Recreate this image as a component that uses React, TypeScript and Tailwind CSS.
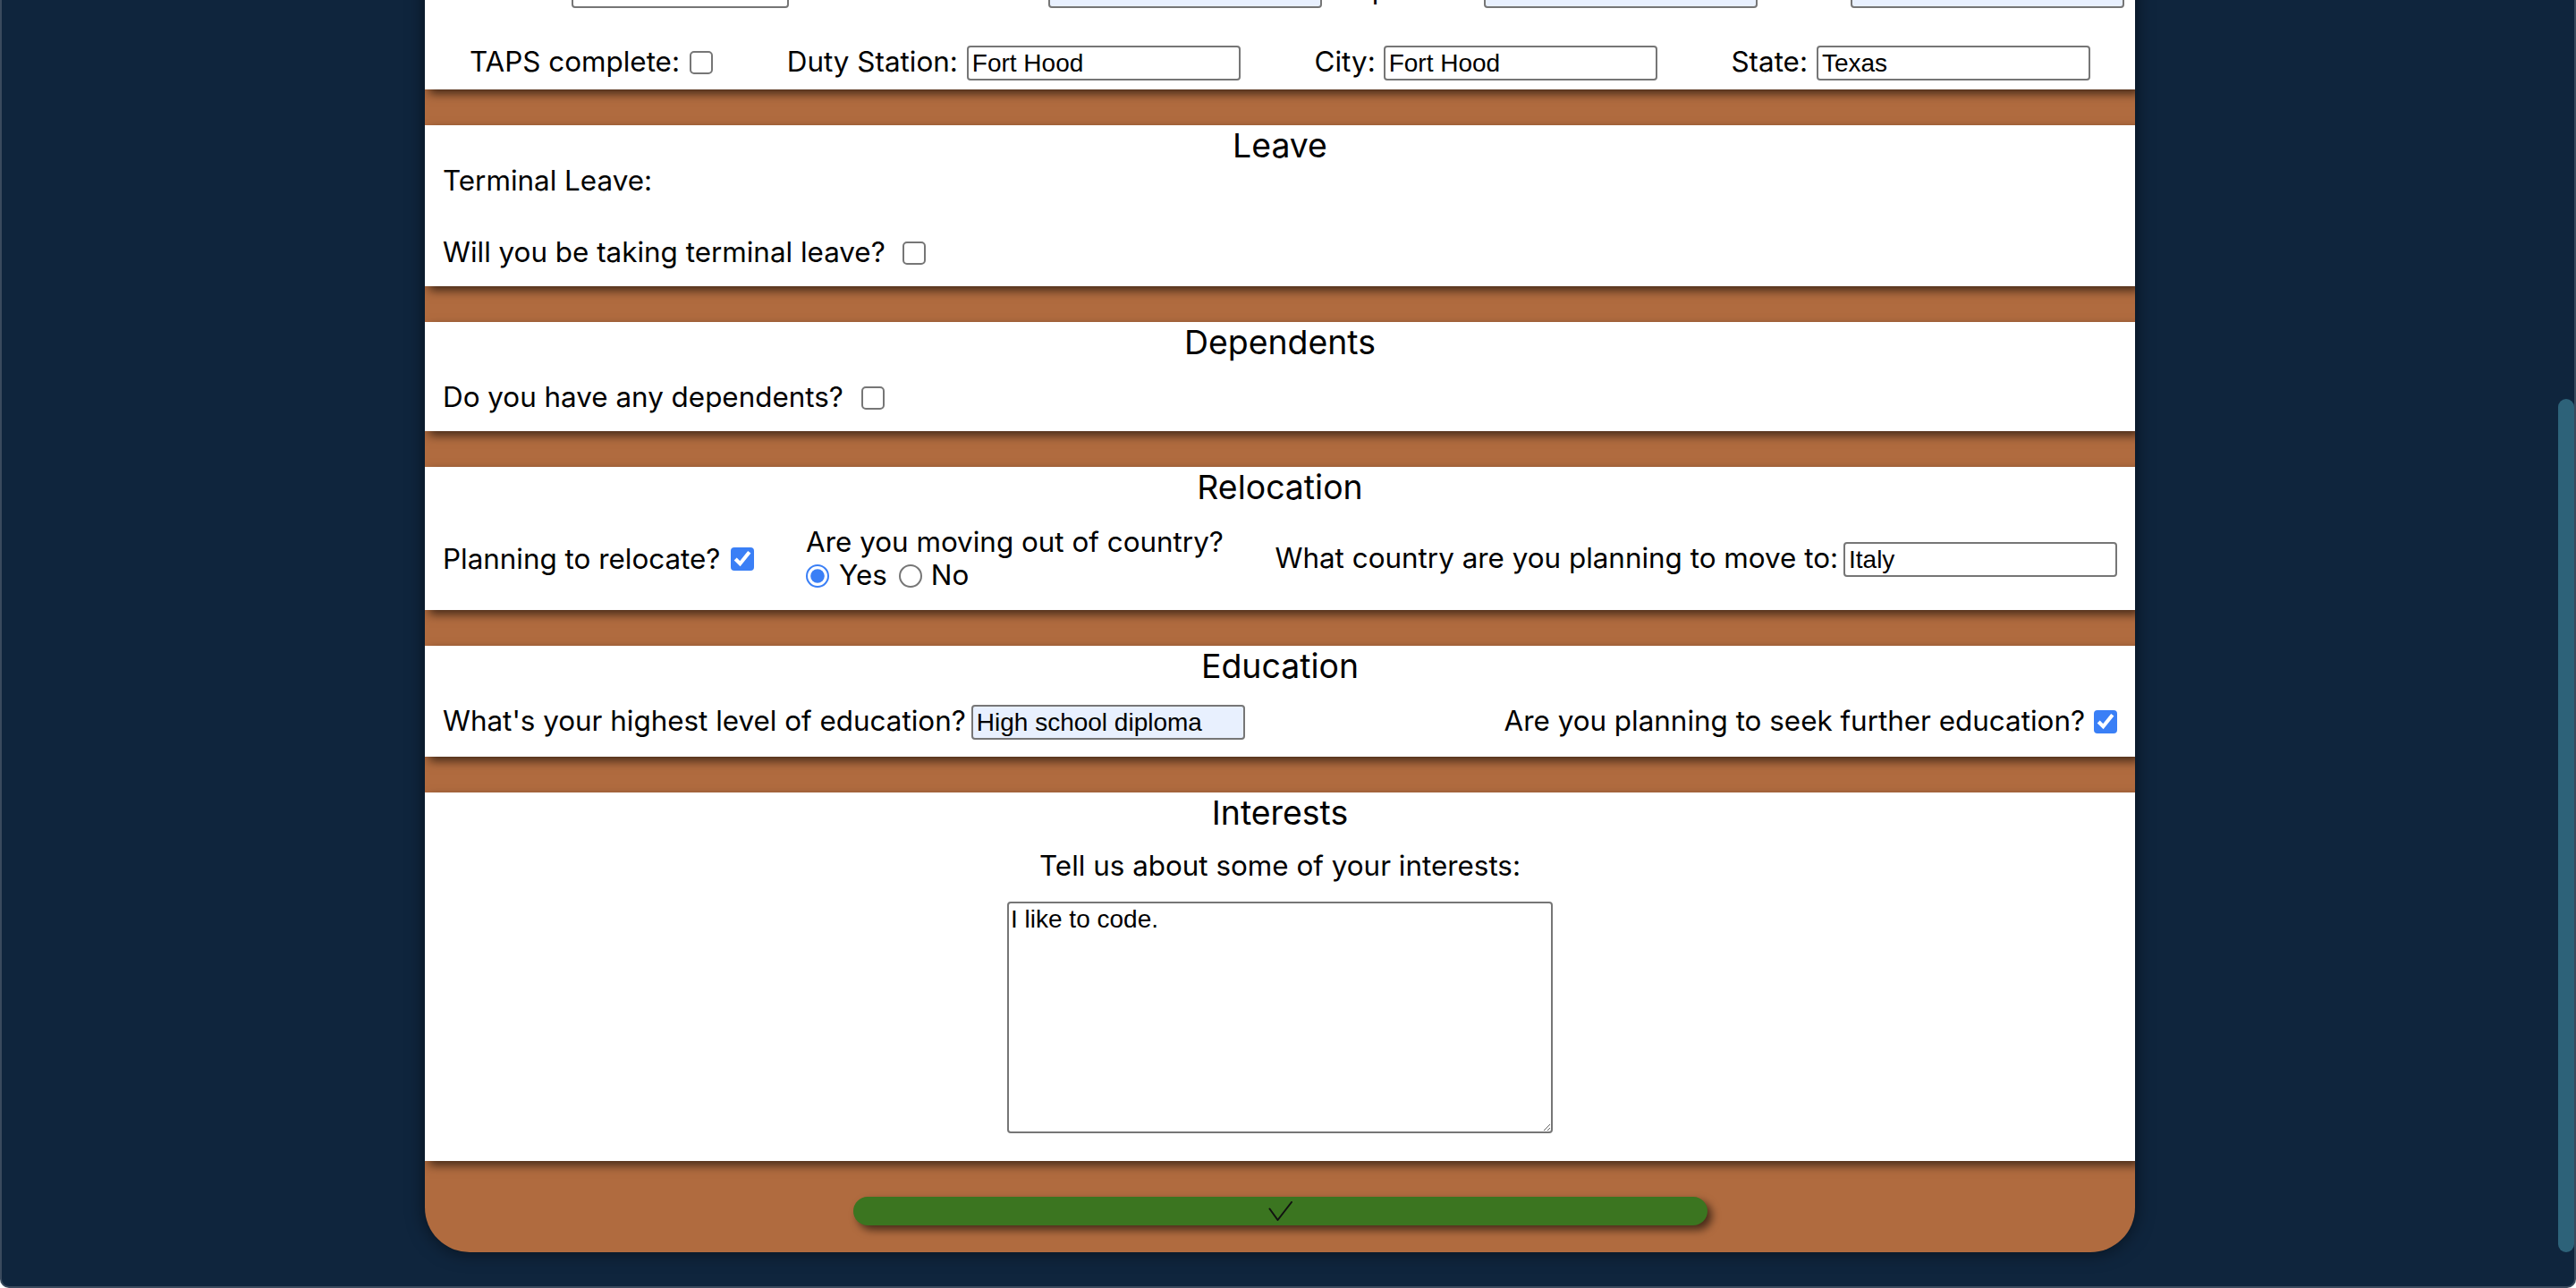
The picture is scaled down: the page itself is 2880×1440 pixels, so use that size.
import React from "react";

const sec = "bg-white shadow-[5px_5px_10px_rgba(0,0,0,0.6)]";
const h3 = "pt-[4px] text-center text-[37.4px] leading-[38px] font-normal";
const inp =
  "[zoom:2] w-[153px] border border-[#767676] rounded-[2px] px-[2px] py-[1px] text-[14px] leading-[15.5px] font-['Liberation_Sans',Arial,sans-serif] text-black outline-none bg-white";
const inpBlue =
  "[zoom:2] w-[153px] border border-[#767676] rounded-[2px] px-[2px] py-[1px] text-[14px] leading-[15.5px] font-['Liberation_Sans',Arial,sans-serif] text-black outline-none bg-[#e8f0fe]";
const cb = "[zoom:2] m-0 w-[13px] h-[13px] shrink-0 accent-[#3a7ff6]";
const rd = "[zoom:2] m-0 w-[13px] h-[13px] shrink-0 accent-[#3a7ff6]";

function CheckMark() {
  return (
    <svg width="27" height="22" viewBox="0 0 27 22" fill="none">
      <path d="M1.5 8.5 L10.5 21 L26 1" stroke="#111" strokeWidth="2" strokeLinecap="round" strokeLinejoin="round" />
    </svg>
  );
}

export default function App() {
  return (
    <div className="h-[1440px] w-full overflow-hidden flex bg-[#0f253d] border-l-2 border-r-2 border-b-2 border-[#3a4a5d] rounded-b-[10px] font-['Inter',sans-serif] text-black text-[31.4px] leading-[39px]">
      <div className="flex-1 min-w-0 flex flex-col items-center justify-end pb-[38px] overflow-hidden">
        <div className="w-[1912px] shrink-0 bg-[#b06b3f] rounded-b-[50px] overflow-hidden shadow-[0_0_20px_rgba(0,0,0,0.55)] flex flex-col gap-[40px]">
          {/* Service section (top cut off) */}
          <section className={sec + " pb-[10px]"}>
            <h3 className={h3}>Service Information</h3>
            <div className="mt-[24px] flex items-baseline pr-[12px]">
              <div className="w-[407px] flex items-baseline justify-end">
                <span>Rank:</span>
                <input className={inp + " ml-[4.5px] !w-[121.5px]"} defaultValue="" />
              </div>
              <div className="w-[596px] flex items-baseline justify-end">
                <span>ETS Date:</span>
                <input className={inpBlue + " ml-[4.5px]"} defaultValue="10/01/2024" />
              </div>
              <div className="w-[487px] flex items-baseline justify-end">
                <span>Zip Code:</span>
                <input className={inpBlue + " ml-[4.5px]"} defaultValue="76544" />
              </div>
              <div className="w-[410px] flex items-baseline justify-end">
                <span>Phone:</span>
                <input className={inpBlue + " ml-[4.5px]"} defaultValue="254-555-0100" />
              </div>
            </div>
            <div className="mt-[41px] flex items-baseline justify-between px-[50px]">
              <div className="flex items-center">
                <span>TAPS complete:</span>
                <input type="checkbox" className={cb + " ml-[5.5px]"} />
              </div>
              <div className="flex items-baseline">
                <span>Duty Station:</span>
                <input className={inp + " ml-[5px]"} defaultValue="Fort Hood" />
              </div>
              <div className="flex items-baseline">
                <span>City:</span>
                <input className={inp + " ml-[4.5px]"} defaultValue="Fort Hood" />
              </div>
              <div className="flex items-baseline">
                <span>State:</span>
                <input className={inp + " ml-[5px]"} defaultValue="Texas" />
              </div>
            </div>
          </section>

          {/* Leave */}
          <section className={sec + " pb-[18px]"}>
            <h3 className={h3}>Leave</h3>
            <div className="mt-[1px] px-[20px]">Terminal Leave:</div>
            <div className="mt-[41px] px-[20px] flex items-center">
              <span>Will you be taking terminal leave?</span>
              <input type="checkbox" className={cb + " ml-[9.5px]"} />
            </div>
          </section>

          {/* Dependents */}
          <section className={sec + " pb-[18px]"}>
            <h3 className={h3}>Dependents</h3>
            <div className="mt-[23px] px-[20px] flex items-center">
              <span>Do you have any dependents?</span>
              <input type="checkbox" className={cb + " ml-[10px]"} />
            </div>
          </section>

          {/* Relocation */}
          <section className={sec + " pb-[20px]"}>
            <h3 className={h3}>Relocation</h3>
            <div className="mt-[24px] px-[20px] flex items-center justify-between">
              <div className="flex items-center">
                <span>Planning to relocate?</span>
                <input type="checkbox" defaultChecked className={cb + " ml-[6px]"} />
              </div>
              <div className="flex flex-col leading-[37px]">
                <span>Are you moving out of country?</span>
                <div className="flex items-center">
                  <input type="radio" name="oc" defaultChecked className={rd} />
                  <span className="ml-[11px]">Yes</span>
                  <input type="radio" name="oc" className={rd + " ml-[6.5px]"} />
                  <span className="ml-[10px]">No</span>
                </div>
              </div>
              <div className="flex items-baseline">
                <span>What country are you planning to move to:</span>
                <input className={inp + " ml-[3px]"} defaultValue="Italy" />
              </div>
            </div>
          </section>

          {/* Education */}
          <section className={sec + " pb-[19px]"}>
            <h3 className={h3}>Education</h3>
            <div className="mt-[23px] px-[20px] flex items-baseline justify-between">
              <div className="flex items-baseline">
                <span>What's your highest level of education?</span>
                <input className={inpBlue + " ml-[3px]"} defaultValue="High school diploma" />
              </div>
              <div className="flex items-center">
                <span>Are you planning to seek further education?</span>
                <input type="checkbox" defaultChecked className={cb + " ml-[5px]"} />
              </div>
            </div>
          </section>

          {/* Interests */}
          <section className={sec + " pb-[31px]"}>
            <h3 className={h3}>Interests</h3>
            <div className="mt-[21px] text-center">Tell us about some of your interests:</div>
            <div className="mt-[20px] flex justify-center">
              <textarea
                className="[zoom:2] block w-[305px] h-[129.5px] border border-[#767676] rounded-[2px] p-[1px] text-[14px] leading-[normal] font-['Liberation_Sans',Arial,sans-serif] text-black outline-none bg-white"
                defaultValue="I like to code."
              />
            </div>
          </section>

          {/* Submit */}
          <div className="pb-[30px] flex justify-center">
            <button className="w-[955px] h-[32px] rounded-full bg-[#3b7520] shadow-[5px_5px_10px_rgba(0,0,0,0.6)] flex items-center justify-center">
              <CheckMark />
            </button>
          </div>
        </div>
      </div>
      <div className="w-[18px] shrink-0 flex flex-col pt-[446px] pb-[38px]">
        <div className="flex-1 rounded-full bg-[#2d6279]" />
      </div>
    </div>
  );
}
